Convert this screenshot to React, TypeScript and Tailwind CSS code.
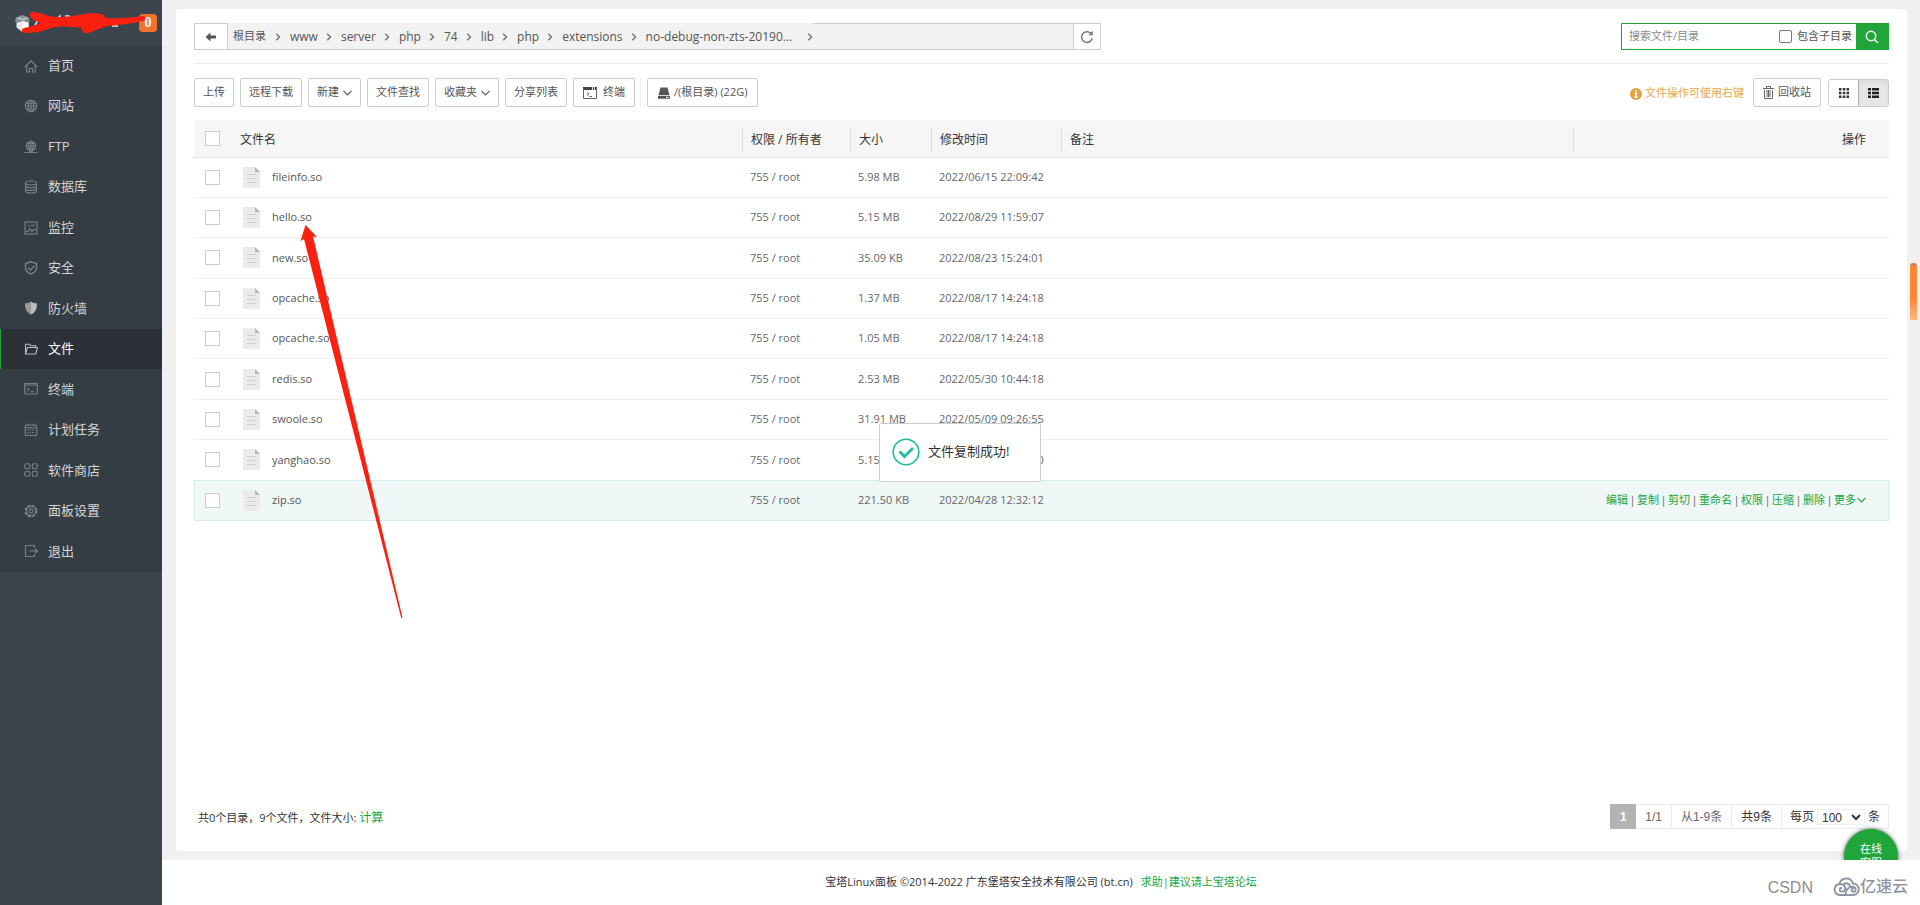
import { Fragment, type ReactNode } from 'react';
import clsx from 'clsx';

// =====================
// data
const menus = [
  { name: '首页', icon: 'home' },
  { name: '网站', icon: 'site' },
  { name: 'FTP', icon: 'ftp' },
  { name: '数据库', icon: 'database' },
  { name: '监控', icon: 'monitor' },
  { name: '安全', icon: 'safe' },
  { name: '防火墙', icon: 'firewall' },
  { name: '文件', icon: 'files', active: true },
  { name: '终端', icon: 'terminal' },
  { name: '计划任务', icon: 'cron' },
  { name: '软件商店', icon: 'soft' },
  { name: '面板设置', icon: 'config' },
  { name: '退出', icon: 'exit' },
];

const crumbs = ['www', 'server', 'php', '74', 'lib', 'php', 'extensions', 'no-debug-non-zts-20190...'];

const files = [
  { name: 'fileinfo.so', size: '5.98 MB', time: '2022/06/15 22:09:42' },
  { name: 'hello.so', size: '5.15 MB', time: '2022/08/29 11:59:07' },
  { name: 'new.so', size: '35.09 KB', time: '2022/08/23 15:24:01' },
  { name: 'opcache.so', size: '1.37 MB', time: '2022/08/17 14:24:18' },
  { name: 'opcache.so', size: '1.05 MB', time: '2022/08/17 14:24:18' },
  { name: 'redis.so', size: '2.53 MB', time: '2022/05/30 10:44:18' },
  { name: 'swoole.so', size: '31.91 MB', time: '2022/05/09 09:26:55' },
  { name: 'yanghao.so', size: '5.15 MB', time: '2022/08/29 11:59:00' },
  { name: 'zip.so', size: '221.50 KB', time: '2022/04/28 12:32:12', hover: true },
];

const actions = ['编辑', '复制', '剪切', '重命名', '权限', '压缩', '删除'];

// =====================
// icons
const menuIcons: Record<string, ReactNode> = {
  home: <path d="M.8 8 7 1.800 13.200 8M2.800 6.800V13h2.700V9.500h3V13h2.700V6.800" />,
  site: (
    <>
      <circle cx="7" cy="7" r="5.700" />
      <ellipse cx="7" cy="7" rx="2.700" ry="5.700" />
      <path d="M1.300 7h11.400M2.200 4.200h9.600M2.200 9.800h9.600M7 1.300v11.400" />
    </>
  ),
  ftp: (
    <>
      <circle cx="7" cy="6" r="4.800" />
      <ellipse cx="7" cy="6" rx="2.200" ry="4.800" />
      <path d="M2.200 6h9.600M3 3.500h8M3 8.500h8M7 1.200v9.600M.5 12.500h13M5 11.200h4" />
    </>
  ),
  database: (
    <>
      <ellipse cx="7" cy="3" rx="5.500" ry="2" />
      <path d="M1.500 3v8c0 1.100 2.500 2 5.500 2s5.500-.9 5.500-2V3M1.500 5.700c0 1.100 2.500 2 5.500 2s5.500-.9 5.500-2M1.500 8.400c0 1.100 2.500 2 5.500 2s5.500-.9 5.500-2" />
    </>
  ),
  monitor: (
    <>
      <rect x="1" y="1" width="12" height="12" />
      <path d="M4 4.500h2M8 3.500v2M10 3.500v2M2 10.500h2l2-3 2 3 1.500-2H12" />
    </>
  ),
  safe: <path d="M7 .8 12.500 2.500v4.200c0 3-2.300 5-5.500 6.500-3.200-1.500-5.500-3.500-5.500-6.500V2.500zM4.200 6.800l2.200 2.200 4-4.300" strokeWidth="1.400" />,
  firewall: (
    <>
      <path d="M7 .5C5 2 3 2.300 1 2.300 1 8 2.500 11.500 7 13.500z" fill="currentColor" stroke="none" opacity=".75" />
      <path d="M7 .5c2 1.500 4 1.800 6 1.800 0 5.700-1.500 9.200-6 11.200z" fill="currentColor" stroke="none" />
    </>
  ),
  files: <path d="M1.500 12V2.200h4l1.200 1.500h5V5.500M1.500 12l2-6.500h10L11.800 12z" />,
  terminal: (
    <>
      <rect x=".7" y="1.500" width="12.600" height="10.500" rx=".8" />
      <path d="M.7 3h12.600M3.200 5.800 5.200 7.500l-2 1.700M6.500 9.700H10" />
    </>
  ),
  cron: (
    <>
      <rect x="1.200" y="2" width="11.600" height="10.500" rx="1" />
      <path d="M4 .8v2M10 .8v2M1.200 4.800h11.600" />
      <path d="M3 7h8M3 9.800h8" strokeDasharray="1.500 1" />
    </>
  ),
  soft: (
    <>
      <rect x=".8" y=".8" width="4.900" height="4.900" rx="1.200" />
      <rect x="8.300" y=".8" width="4.900" height="4.900" rx="1.200" />
      <rect x=".8" y="8.300" width="4.900" height="4.900" rx="1.200" />
      <rect x="8.300" y="8.300" width="4.900" height="4.900" rx="1.200" />
    </>
  ),
  config: (
    <>
      <circle cx="7" cy="7" r="5.600" strokeWidth="1.600" strokeDasharray="2.900 1.500" />
      <circle cx="7" cy="7" r="4.600" />
      <circle cx="7" cy="7" r="1.900" />
    </>
  ),
  exit: <path d="M10.500 4V1.500h-9v11h9V10M5.500 7h8M11.200 4.800 13.400 7l-2.200 2.200" />,
};

function MenuIcon({ name, active }: { name: string; active?: boolean }) {
  const bright = active || name === 'firewall';
  return (
    <svg viewBox="0 0 14 14" className={clsx('size-[14px]', bright ? 'text-[#b9bcbf]' : 'text-[#7b8187]')} fill="none" stroke="currentColor" strokeWidth="1.1">
      {menuIcons[name]}
    </svg>
  );
}

function Chevron() {
  return (
    <svg viewBox="0 0 6 8" className="h-2 w-1.5" fill="none" stroke="#777" strokeWidth="1.500">
      <path d="M1.200.8 4.500 4 1.200 7.200" />
    </svg>
  );
}

function ArrowDown() {
  return (
    <svg viewBox="0 0 9 6" className="h-1.5 w-[9px]" fill="none" stroke="currentColor" strokeWidth="1.100">
      <path d="m.5.800 4 4.200 4-4.200" />
    </svg>
  );
}

function FileIcon() {
  return (
    <svg viewBox="0 0 17 21" className="h-[21px] w-[17px]">
      <path d="M0 0h12l5 5v16H0z" fill="#ebebeb" />
      <path d="M12 0v5h5z" fill="#b5b5b5" />
      <path d="M4 7.500h9M4 11.500h9M4 15.500h9" stroke="#cfcfcf" />
    </svg>
  );
}

// =====================
// small controls
function ToolButton({ children, className = 'px-2' }: { children: ReactNode; className?: string }) {
  return (
    <button type="button" className={clsx('flex h-[29px] items-center gap-1 rounded-xs border border-[#ccc] bg-white text-[11px] text-[#555]', className)}>
      {children}
    </button>
  );
}

function CheckBox({ label }: { label: string }) {
  return <input type="checkbox" aria-label={label} className="block size-[15px] appearance-none border border-[#ccc] bg-white" />;
}

// =====================
// sidebar
function Sidebar() {
  return (
    <aside className="w-[162px] shrink-0 bg-[#3c444d]">
      <div className="relative flex h-[46px] items-center justify-between pr-[5px] pl-[15px]">
        <svg viewBox="0 0 15 17" className="h-[17px] w-[15px]">
          <path d="M7.500 0 14 2.500 15 7 7.500 6 0 7l1-4.500z" fill="#8c949b" />
          <path d="M1.500 7.500 7.500 6l6 1.500v5L7.500 17l-6-4.500z" fill="#e6e8e9" />
          <path d="M7.500 6l6 1.500v5L7.500 17z" fill="#fff" />
          <path d="M3 3l4.500 1.500L12 3" stroke="#d6d9db" fill="none" />
        </svg>
        <span className="flex h-[18px] w-[18px] items-center justify-center rounded-[4px] bg-[#f0722b] font-['Liberation_Serif',serif] text-sm font-bold text-white">0</span>
        <svg viewBox="0 0 124 24" className="absolute top-[11px] left-[22px] h-6 w-[124px]">
          <path d="m13 14 5-8 1 5M36 7l2-2v3M43 5h4l1 2M90 15h6" fill="none" stroke="#e8e8e8" strokeWidth="1.500" />
          <path d="M10 1c4-1 8 2 14 3 11 4 24 1 34 0 5-2 14-2 22-1 2 2 3 3 5 4 12 1 27-1 36-2 3 0 3 4 0 5-9 2-22 4-35 5-8 2-13 5-20 7-4 1-7-2-6-5-10-1-22-3-34 1-7 3-16 4-24 4-3-1-3-4 0-5 6-1 12-3 17-5-4-1-8-3-10-5-1-2-2-5 1-6z" fill="#fc2010" />
        </svg>
      </div>
      <nav className="grid h-[526px] auto-rows-fr bg-[#353d44]">
        {menus.map((m) => (
          <a
            key={m.name}
            href="#"
            className={clsx(
              'mb-px flex items-center gap-2.5 border-l pl-[23px] text-[13px]',
              m.active ? 'border-[#20a53a] bg-[#2c3138] text-white' : 'border-transparent text-[#d4d6d8]',
            )}
          >
            <MenuIcon name={m.icon} active={m.active} />
            {m.name}
          </a>
        ))}
      </nav>
    </aside>
  );
}

// =====================
// path + search
function PathBar() {
  return (
    <div className="flex items-center justify-between border-b border-[#ececec] pb-[13px]">
      <div className="flex h-[27px] w-[907px] border border-[#ccc] bg-[#f2f2f2]">
        <button type="button" aria-label="返回" className="flex w-[33px] items-center justify-center border-r border-[#ccc] bg-white">
          <svg viewBox="0 0 12 10" className="h-2.5 w-3" fill="#555">
            <path d="M5.500.5v3H11v3H5.500v3L.5 5z" />
          </svg>
        </button>
        <div className="-mt-px flex items-center border-t border-[#f2f2f2] text-xs text-[#555]">
          <a href="#" className="pr-[9px] pl-[5px] text-[11px]">根目录</a>
          <Chevron />
          {crumbs.map((c, i) => (
            <Fragment key={i}>
              <a href="#" className={clsx('pl-[9px]', i === crumbs.length - 1 ? 'pr-[15px]' : 'pr-2')}>{c}</a>
              <Chevron />
            </Fragment>
          ))}
        </div>
        <button type="button" aria-label="刷新" className="ml-auto flex w-[27px] items-center justify-center border-l border-[#ccc] bg-white">
          <svg viewBox="0 0 14 14" className="size-[14px]" fill="none" stroke="#777" strokeWidth="1.500">
            <path d="M12.200 8.500A5.400 5.400 0 1 1 10.800 3.200L12 4.500" />
            <path d="M12.800.8v4.500H8.300z" fill="#777" stroke="none" />
          </svg>
        </button>
      </div>
      <div className="flex h-[27px] w-[268px] border border-[#20a53a] text-[11px] text-[#555]">
        <input type="text" aria-label="搜索" placeholder="搜索文件/目录" className="min-w-0 flex-1 pl-[7px] placeholder:text-[#8a8a8a]" />
        <label className="flex items-center gap-[5px] pr-1">
          <input type="checkbox" className="size-[13px] appearance-none rounded-[2px] border border-[#777] bg-white" />
          包含子目录
        </label>
        <button type="button" aria-label="搜索" className="flex w-8 items-center justify-center bg-[#20a53a]">
          <svg viewBox="0 0 14 14" className="size-[14px]" fill="none" stroke="#fff" strokeWidth="1.500">
            <circle cx="6" cy="6" r="4.700" />
            <path d="m9.500 9.500 3.500 3.500" />
          </svg>
        </button>
      </div>
    </div>
  );
}

// =====================
// toolbar
function Toolbar() {
  return (
    <div className="mt-[14px] flex items-center justify-between">
      <div className="flex items-center gap-1.5">
        <ToolButton>上传</ToolButton>
        <ToolButton>远程下载</ToolButton>
        <ToolButton>新建<ArrowDown /></ToolButton>
        <ToolButton>文件查找</ToolButton>
        <ToolButton>收藏夹<ArrowDown /></ToolButton>
        <ToolButton>分享列表</ToolButton>
        <div className="border-r border-[#ececec] pr-[5px]">
          <ToolButton className="px-[9px]">
            <svg viewBox="0 0 14 12" className="mr-0.5 h-3 w-[14px]" fill="none" stroke="#666">
              <path d="M0 1.500h14" strokeWidth="3" stroke="#444" strokeDasharray="9 .8 1.200 .8" />
              <path d="M.5 2v9.500h13V2M4 5.500l2 1.500-2 1.500M6.500 9.500H9" />
            </svg>
            终端
          </ToolButton>
        </div>
        <ToolButton className="px-2.5">
          <svg viewBox="0 0 12 12" className="h-3 w-3" fill="#555">
            <path d="M2.500.5h7L11.500 8H.5zM0 8.800h12v3H0z" />
            <path d="M8 10.300h2.500" stroke="#fff" />
          </svg>
          /(根目录) (22G)
        </ToolButton>
      </div>
      <div className="flex items-center">
        <span className="mr-[9px] flex items-center gap-[3px] pt-0.5 text-[11px] text-[#e9a64a]">
          <svg viewBox="0 0 12 12" className="size-3">
            <circle cx="6" cy="6" r="6" fill="#e6a23c" />
            <path d="M6 2v1.800M4.700 5.200h1.500v4M4.500 9.300h3.200" stroke="#fff" strokeWidth="1.500" fill="none" />
          </svg>
          文件操作可使用右键
        </span>
        <ToolButton className="mr-[7px] px-[9px]">
          <svg viewBox="0 0 11 13" className="h-[13px] w-[11px]" fill="none" stroke="#666">
            <path d="M0 2.500h11M3.500 2V.5h4V2M1.500 4v8.500h8V4M4 4v7M5.500 4v7M7 4v7" />
          </svg>
          回收站
        </ToolButton>
        <div className="flex h-7 overflow-hidden rounded-[3px] border border-[#ccc]">
          <button type="button" aria-label="图标" className="flex w-[29px] items-center justify-center bg-white">
            <svg viewBox="0 0 10 10" className="size-2.5" fill="#333">
              <path d="M0 0h2.500v2.500H0zM3.800 0h2.500v2.500H3.800zM7.500 0H10v2.500H7.500zM0 3.800h2.500v2.500H0zM3.800 3.800h2.500v2.500H3.800zM7.500 3.800H10v2.500H7.500zM0 7.500h2.500V10H0zM3.800 7.500h2.500V10H3.800zM7.500 7.500H10V10H7.500z" />
            </svg>
          </button>
          <button type="button" aria-label="列表" className="flex w-[30px] items-center justify-center border-l border-[#adadad] bg-[#e6e6e6] inset-shadow-sm">
            <svg viewBox="0 0 11 10" className="h-2.5 w-[11px]" fill="#222">
              <path d="M0 0h3v2.500H0zM4 0h7v2.500H4zM0 3.800h3v2.500H0zM4 3.800h7v2.500H4zM0 7.500h3V10H0zM4 7.500h7V10H4z" />
            </svg>
          </button>
        </div>
      </div>
    </div>
  );
}

// =====================
// file table
function HeadCell({ children }: { children?: ReactNode }) {
  return (
    <th className="p-0 pt-[3px] text-left font-normal">
      <div className="flex h-6 items-center border-l border-[#ddd] pl-2">{children}</div>
    </th>
  );
}

function FileTable() {
  return (
    <table className="mt-[13px] h-[401px] w-full table-fixed border-collapse text-[11px] text-[#666]">
      <colgroup>
        <col className="w-[46px]" />
        <col className="w-[502px]" />
        <col className="w-[108px]" />
        <col className="w-[81px]" />
        <col className="w-[130px]" />
        <col />
        <col className="w-[316px]" />
      </colgroup>
      <thead className="bg-[#f6f6f6] text-xs text-[#333]">
        <tr className="h-[37px] border-b border-[#e6e6e6]">
          <th className="p-0 pl-[11px]"><CheckBox label="全选" /></th>
          <th className="p-0 pt-[3px] text-left font-normal">文件名</th>
          <HeadCell>权限 / 所有者</HeadCell>
          <HeadCell>大小</HeadCell>
          <HeadCell>修改时间</HeadCell>
          <HeadCell>备注</HeadCell>
          <th className="p-0 pt-[3px] font-normal">
            <div className="flex h-6 items-center justify-end border-l border-[#ddd] pr-[23px]">操作</div>
          </th>
        </tr>
      </thead>
      <tbody>
        {files.map((f, i) => (
          <tr key={i} className={clsx('border-b', f.hover ? 'border-[#d8ece8] bg-[#eff8f7] outline outline-[#d8ece8] -outline-offset-1' : 'border-[#efefef]')}>
            <td className="p-0 pl-[11px]"><CheckBox label={f.name} /></td>
            <td className="p-0 pl-[3px]">
              <a href="#" className="flex items-center gap-3 text-[#555]"><FileIcon />{f.name}</a>
            </td>
            <td className="p-0 pl-2">755 / root</td>
            <td className="p-0 pl-2">{f.size}</td>
            <td className="p-0 pl-2">{f.time}</td>
            <td className="p-0" />
            <td className="p-0 pr-[23px]">
              {f.hover && (
                <div className="flex items-center justify-end gap-px text-[#20a53a]">
                  {actions.map((a) => (
                    <Fragment key={a}>
                      <a href="#">{a}</a>
                      <span className="w-[7px] text-center text-[#666]">|</span>
                    </Fragment>
                  ))}
                  <a href="#" className="flex items-center gap-px">更多<ArrowDown /></a>
                </div>
              )}
            </td>
          </tr>
        ))}
      </tbody>
    </table>
  );
}

function Pager() {
  return (
    <div className="mt-auto flex items-center justify-between">
      <p className="pt-[3px] pl-1 text-[11px] text-[#333]">
        共0个目录，9个文件，文件大小: <a href="#" className="text-xs text-[#20a53a]">计算</a>
      </p>
      <div className="flex h-[25px] items-stretch border border-[#ececec] font-['Liberation_Sans','Noto_Sans_CJK_SC',sans-serif] text-xs text-[#333]">
        <span className="-my-px -ml-px flex w-[26px] items-center justify-center bg-[#b3b3b3] font-bold text-white">1</span>
        <span className="flex items-center border-r border-[#ececec] px-[9px] text-[#666]">1/1</span>
        <span className="flex items-center border-r border-[#ececec] px-[9px] text-[#666]">从1-9条</span>
        <span className="flex items-center border-r border-[#ececec] px-[9px]">共9条</span>
        <label className="flex items-center gap-[3px] px-2">
          每页
          <select className="h-4 w-12 border border-[#eee] bg-white">
            <option>100</option>
          </select>
          条
        </label>
      </div>
    </div>
  );
}

// =====================
// floating layers
function Toast() {
  return (
    <div role="status" className="absolute top-[423px] left-[879px] flex h-[59px] w-[162px] items-center gap-2 rounded-[2px] border border-[#c8cdd0] bg-white pb-0.5 pl-3 text-[13px] text-[#333]">
      <svg viewBox="0 0 28 28" className="size-7" fill="none" stroke="#1abc9c">
        <circle cx="14" cy="14" r="12.800" strokeWidth="1.600" />
        <path d="m7.500 13.500 5 5 8.500-8.500" strokeWidth="2.800" />
      </svg>
      文件复制成功!
    </div>
  );
}

function RedArrow() {
  return (
    <svg viewBox="0 0 104 396" className="pointer-events-none absolute top-[224px] left-[300px] h-[396px] w-[104px]">
      <path d="M5.500 1 17 13l-4-.5L102.500 393.500l-1.300.5L4 15l-3.500 2z" fill="#fc2010" />
    </svg>
  );
}

function Watermark() {
  return (
    <div className="absolute right-3 bottom-[5px] flex items-center">
      <span className="mr-5 pt-1 font-['Liberation_Sans',sans-serif] text-base text-[#8d8d8d]">CSDN</span>
      <svg viewBox="0 0 27 20" className="h-5 w-[27px]" fill="none" stroke="#8f95a3" strokeWidth="1.900" strokeLinecap="round">
        <path d="M6.500 7.800a7 7 0 0 1 13.500-.3" />
        <path d="M10.500 8.500c2.500-2.200 6-1 6.500 1.500" />
        <path d="M14 19H7a5.500 5.500 0 1 1 4.800-8.300c1.500 3-1 5.300-3.600 4.800-2.200-.5-2-3.500.3-3.500" />
        <path d="M14 19c-3 0-1-8 5.500-8.300 3.500 0 4.500 4.800 1 5-2.500 0-2.500-2.700-.8-2.900M20 7.500A5.600 5.600 0 0 1 20 19h-6" />
      </svg>
      <span className="text-base font-medium text-[#8f95a3]">亿速云</span>
    </div>
  );
}

// =====================
// App Root
export default function App() {
  return (
    <div className="relative flex min-h-screen overflow-hidden bg-white font-['Open_Sans','Noto_Sans_CJK_SC',sans-serif]">
      <Sidebar />
      <div className="flex min-w-0 flex-1 flex-col">
        <div className="relative flex flex-1 flex-col overflow-hidden bg-[#f0f0f0] pt-[9px] pr-[13px] pb-[9px] pl-[14px]">
          <main className="flex flex-1 flex-col rounded-[4px] bg-white px-[18px] pt-[14px] pb-[22px]">
            <PathBar />
            <Toolbar />
            <FileTable />
            <Pager />
          </main>
          <div className="absolute top-[263px] right-[3px] h-[57px] w-[7px] rounded-t-full border-t-2 border-[#c97b4c] bg-linear-to-b from-[#fb8634] from-60% to-[#fdb679]" />
          <button type="button" className="absolute right-[22px] -bottom-[23px] flex size-[54px] flex-col items-center rounded-full bg-[#20a53a] pt-[13px] text-[11px]/[14px] text-white shadow-[0_0_4px_#555]">
            <span>在线</span>
            <span>客服</span>
          </button>
        </div>
        <footer className="flex h-[45px] items-center justify-center gap-2 text-[11px] text-[#333]">
          <span>宝塔Linux面板 ©2014-2022 广东堡塔安全技术有限公司 (bt.cn)</span>
          <a href="#" className="text-[#20a53a]">求助|建议请上宝塔论坛</a>
        </footer>
      </div>
      <Toast />
      <RedArrow />
      <Watermark />
    </div>
  );
}
